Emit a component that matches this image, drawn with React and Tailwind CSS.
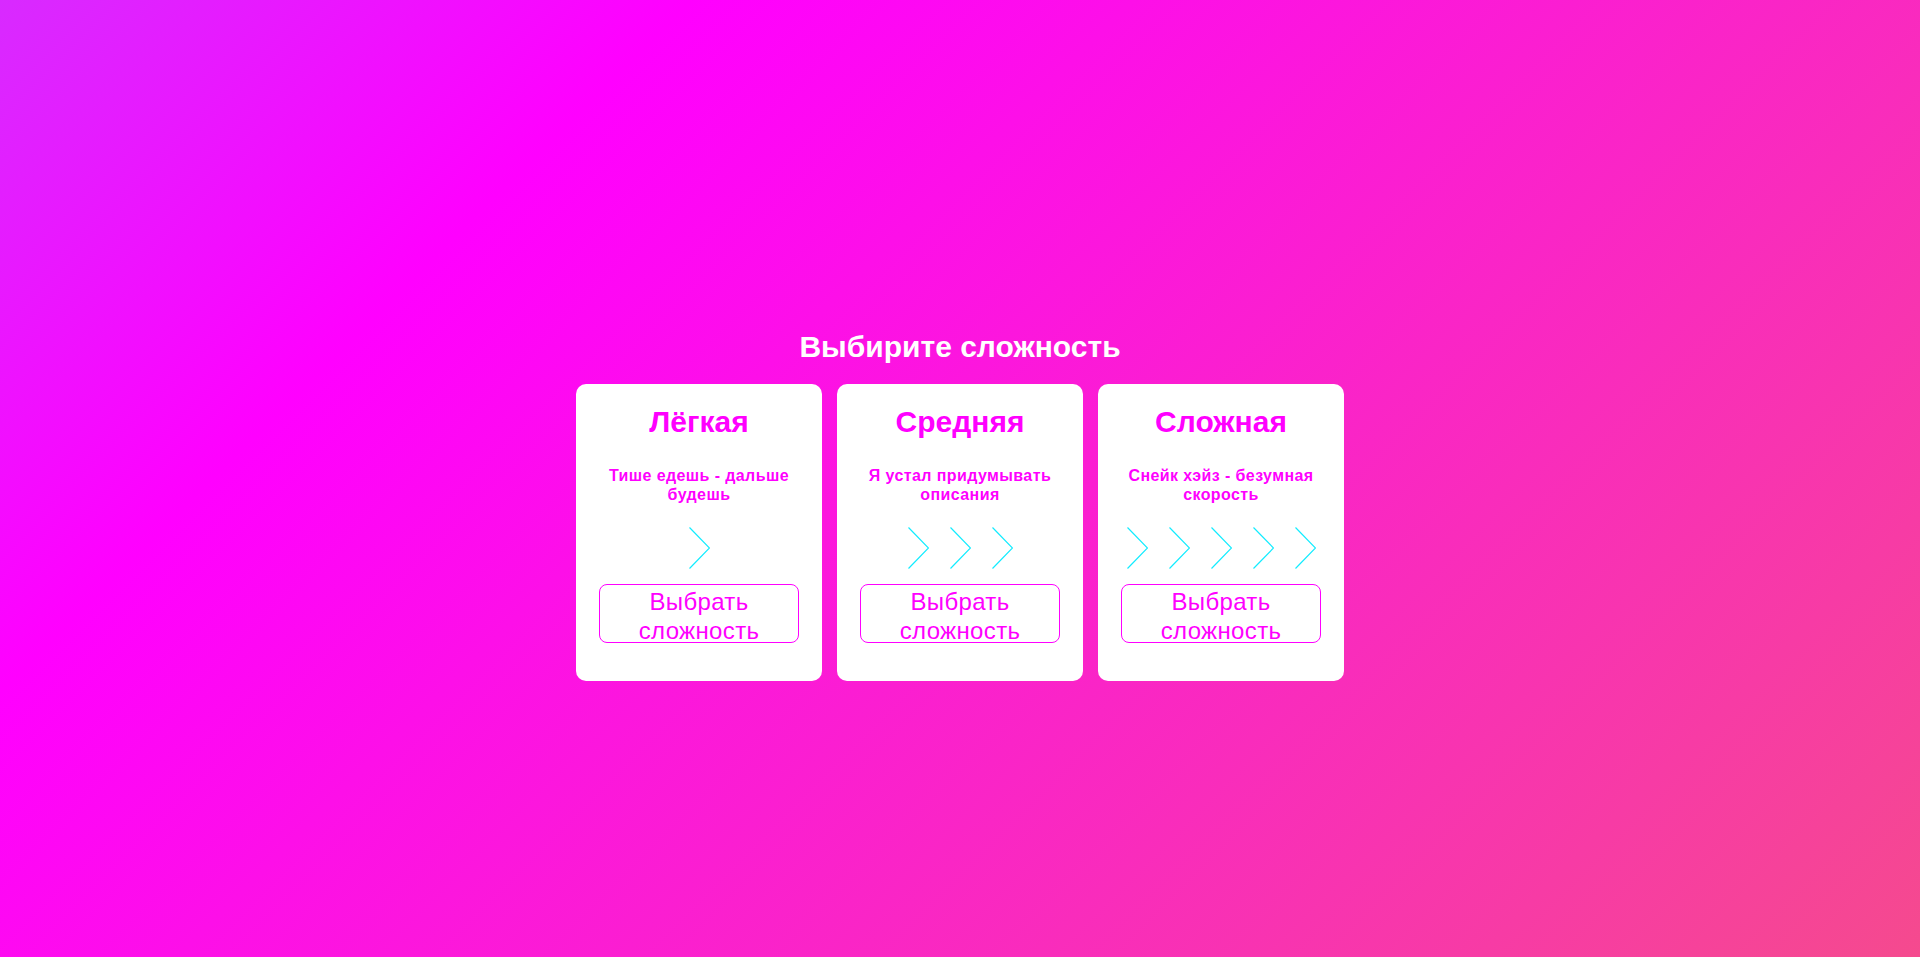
import React from 'react';

const levels = [
  { title: 'Лёгкая', text: 'Тише едешь - дальше будешь', speed: 1 },
  { title: 'Средняя', text: 'Я устал придумывать описания', speed: 3 },
  { title: 'Сложная', text: 'Снейк хэйз - безумная скорость', speed: 5 },
];

function Chevron() {
  return (
    <svg width="21" height="42" viewBox="0 0 21 42" fill="none">
      <polyline points="0.5,0.5 20.5,21 0.5,41.5" stroke="#12ecff" strokeWidth="1.2" />
    </svg>
  );
}

function LevelCard({ title, text, speed }) {
  return (
    <div className="w-[246px] bg-white rounded-[10px] flex flex-col items-center pt-[20.5px] pb-[38px] text-[#ff00ff]">
      <h2 className="text-[30px] leading-[34.5px] font-bold">{title}</h2>
      <p className="mt-[26.5px] w-[204px] text-center text-[16px] leading-[19.5px] font-bold tracking-[0.4px]">{text}</p>
      <div className="mt-[22.5px] flex gap-[21px] h-[42px]">
        {Array.from({ length: speed }).map((_, i) => (
          <Chevron key={i} />
        ))}
      </div>
      <button className="mt-[15px] w-[200px] h-[59px] border border-[#ff00ff] rounded-[8px] flex flex-col items-center justify-start pt-[1.5px] text-[24px] leading-[29px] tracking-[0.35px] text-[#ff00ff] bg-white cursor-pointer overflow-visible">
        <span>Выбрать</span>
        <span>сложность</span>
      </button>
    </div>
  );
}

export default function App() {
  return (
    <div
      className="min-h-screen w-full flex flex-col items-center pt-[330px] bg-[linear-gradient(135deg,#d82aff_0%,#ff00ff_24%,#f54a8e_100%)]"
      style={{ fontFamily: '"Liberation Sans", Arial, sans-serif' }}
    >
      <h1 className="text-[30px] leading-[34.5px] font-bold text-white">Выбирите сложность</h1>
      <div className="mt-[19.5px] flex gap-[15px]">
        {levels.map((l) => (
          <LevelCard key={l.title} {...l} />
        ))}
      </div>
    </div>
  );
}
